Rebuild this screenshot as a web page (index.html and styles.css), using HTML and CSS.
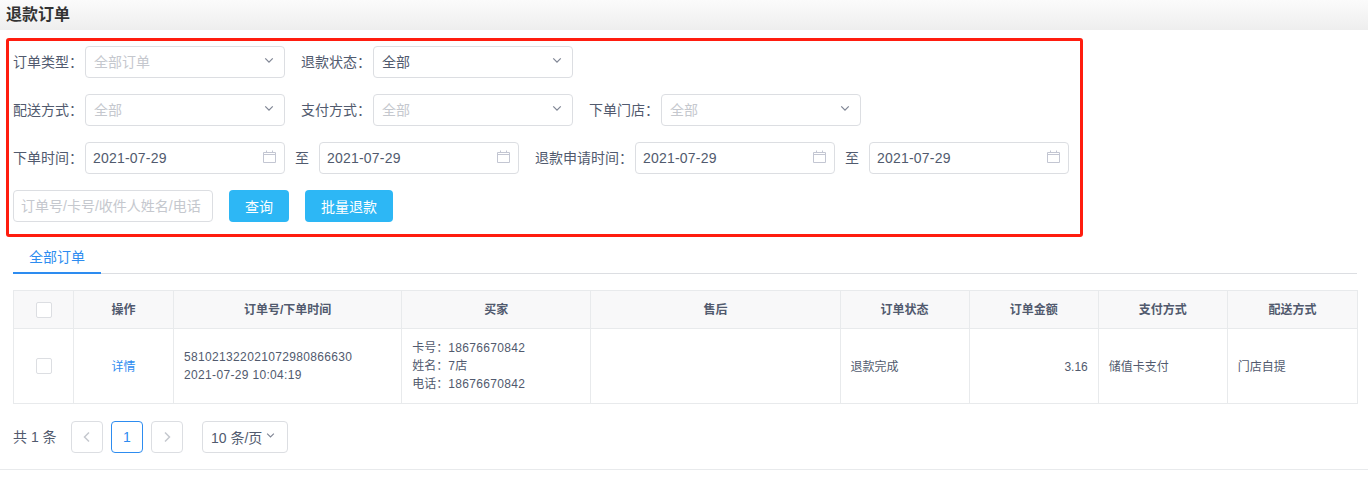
FILE: index.html
```html
<!DOCTYPE html>
<html lang="zh-CN">
<head>
<meta charset="utf-8">
<title>退款订单</title>
<link rel="stylesheet" href="styles.css">
</head>
<body>
<header class="page-head">退款订单</header>
<form class="filter">
  <div class="row">
    <div class="field"><span class="label">订单类型：</span><div class="control"><span class="ph cjk">全部订单</span><svg class="chev" viewBox="0 0 12 8"><path d="M1.5 1.5 6 6l4.5-4.5"/></svg></div></div>
    <div class="field"><span class="label">退款状态：</span><div class="control"><span class="cjk">全部</span><svg class="chev" viewBox="0 0 12 8"><path d="M1.5 1.5 6 6l4.5-4.5"/></svg></div></div>
  </div>
  <div class="row">
    <div class="field"><span class="label">配送方式：</span><div class="control"><span class="ph cjk">全部</span><svg class="chev" viewBox="0 0 12 8"><path d="M1.5 1.5 6 6l4.5-4.5"/></svg></div></div>
    <div class="field"><span class="label">支付方式：</span><div class="control"><span class="ph cjk">全部</span><svg class="chev" viewBox="0 0 12 8"><path d="M1.5 1.5 6 6l4.5-4.5"/></svg></div></div>
    <div class="field"><span class="label">下单门店：</span><div class="control"><span class="ph cjk">全部</span><svg class="chev" viewBox="0 0 12 8"><path d="M1.5 1.5 6 6l4.5-4.5"/></svg></div></div>
  </div>
  <div class="row">
    <div class="field"><span class="label">下单时间：</span><div class="control date"><span class="day">2021-07-29</span><svg class="cal" viewBox="0 0 13 13"><path d="M.5 2.5h12v10H.5zM.5 4.5h12M3.5.5v2M9.5.5v2"/></svg></div><span class="to">至</span><div class="control date"><span class="day">2021-07-29</span><svg class="cal" viewBox="0 0 13 13"><path d="M.5 2.5h12v10H.5zM.5 4.5h12M3.5.5v2M9.5.5v2"/></svg></div></div>
    <div class="field"><span class="label wide">退款申请时间：</span><div class="control date"><span class="day">2021-07-29</span><svg class="cal" viewBox="0 0 13 13"><path d="M.5 2.5h12v10H.5zM.5 4.5h12M3.5.5v2M9.5.5v2"/></svg></div><span class="to">至</span><div class="control date"><span class="day">2021-07-29</span><svg class="cal" viewBox="0 0 13 13"><path d="M.5 2.5h12v10H.5zM.5 4.5h12M3.5.5v2M9.5.5v2"/></svg></div></div>
  </div>
  <div class="row">
    <div class="control search"><span class="ph">订单号/卡号/收件人姓名/电话</span></div>
    <button type="button" class="btn">查询</button>
    <button type="button" class="btn">批量退款</button>
  </div>
</form>
<nav class="tabs"><span class="tab">全部订单</span></nav>
<table class="orders">
  <colgroup><col class="c1"><col class="c2"><col class="c3"><col class="c4"><col class="c5"><col class="c6"><col class="c6"><col class="c6"><col class="c7"></colgroup>
  <thead>
    <tr><th><span class="check"></span></th><th>操作</th><th>订单号/下单时间</th><th>买家</th><th>售后</th><th>订单状态</th><th>订单金额</th><th>支付方式</th><th>配送方式</th></tr>
  </thead>
  <tbody>
    <tr>
      <td class="center"><span class="check"></span></td>
      <td class="center link single">详情</td>
      <td><span class="num">581021322021072980866630</span><br><span class="num">2021-07-29 10:04:19</span></td>
      <td>卡号：<span class="num">18676670842</span><br>姓名：<span class="num">7</span>店<br>电话：<span class="num">18676670842</span></td>
      <td></td>
      <td class="single">退款完成</td>
      <td class="right single">3.16</td>
      <td class="single">储值卡支付</td>
      <td class="single">门店自提</td>
    </tr>
  </tbody>
</table>
<div class="pager">
  <span class="total">共 1 条</span>
  <span class="page off"><svg class="arrow" viewBox="0 0 8 12"><path d="M6 1.5 1.5 6 6 10.5"/></svg></span>
  <span class="page on">1</span>
  <span class="page off"><svg class="arrow" viewBox="0 0 8 12"><path d="M2 1.5 6.5 6 2 10.5"/></svg></span>
  <span class="size">10 条/页<svg class="chev small" viewBox="0 0 12 8"><path d="M1.5 1.5 6 6l4.5-4.5"/></svg></span>
</div>
<div class="foot"></div>
</body>
</html>
```
FILE: styles.css
```css
* { box-sizing: border-box; }
html, body { margin: 0; padding: 0; }
body {
  background: #fff;
  color: #515a6e;
  font-family: "Liberation Sans", "Noto Sans CJK SC", sans-serif;
  font-size: 14px;
  height: 482px;
  overflow: hidden;
}
.page-head {
  height: 30px;
  line-height: 29px;
  padding-left: 6px;
  font-size: 16px;
  font-weight: 700;
  color: #333;
  background: linear-gradient(#fbfbfb, #eeeeee);
}
.filter {
  width: 1077px;
  height: 199px;
  margin: 8px 0 0 6px;
  padding: 5px 4px;
  border: 3px solid #ff1d0f;
  border-radius: 3px;
  display: flex;
  flex-direction: column;
  gap: 16px;
}
.row { display: flex; gap: 16px; height: 32px; }
.field { display: flex; align-items: center; }
.label { width: 72px; padding-bottom: 2px; white-space: nowrap; }
.label.wide { width: 100px; }
.control {
  width: 200px;
  height: 32px;
  padding: 0 8px;
  border: 1px solid #dcdee2;
  border-radius: 4px;
  display: flex;
  align-items: center;
  justify-content: space-between;
  background: #fff;
}
.cjk { padding-bottom: 2px; }
.date { padding-left: 7px; padding-right: 8px; }
.day { letter-spacing: .2px; }
.ph { color: #c5c8ce; }
.search { padding: 0 7px 3px; white-space: nowrap; overflow: hidden; }
.chev { width: 10px; height: 7px; fill: none; stroke: #808695; stroke-width: 1.5; margin-right: 2px; margin-bottom: 3px; }
.chev.small { width: 9px; margin: 0 0 3px 4px; }
.cal { width: 13px; height: 13px; fill: none; stroke: #c3c6d2; stroke-width: 1; margin-bottom: 3px; }
.to { width: 34px; padding-bottom: 2px; text-align: center; }
.btn {
  height: 32px;
  width: 60px;
  padding: 0;
  border: 0;
  border-radius: 4px;
  background: #2db7f5;
  color: #fff;
  font: inherit;
}
.btn + .btn { width: 88px; }
.tabs {
  height: 37px;
  margin: 0 11px 0 13px;
  border-bottom: 1px solid #dcdee2;
  display: flex;
}
.tab {
  width: 88px;
  height: 37px;
  margin-bottom: -1px;
  padding-top: 9px;
  text-align: center;
  color: #2d8cf0;
  border-bottom: 2px solid #2d8cf0;
}
.orders {
  width: 1345px;
  margin: 16px 0 0 13px;
  border-collapse: collapse;
  table-layout: fixed;
  font-size: 12px;
  line-height: 18px;
  border: 1px solid #dcdee2;
}
.c1 { width: 60px; }
.c2 { width: 100px; }
.c3 { width: 228px; }
.c4 { width: 189px; }
.c5 { width: 249px; }
.c6 { width: 129px; }
.c7 { width: 130px; }
.orders th, .orders td { border: 1px solid #e8eaec; padding: 0 10px; }
.orders th {
  height: 38px;
  background: #f8f8f9;
  font-weight: 700;
  text-align: center;
}
.orders td { height: 75px; }
.orders td.single { padding-top: 2px; }
.num { letter-spacing: .33px; }
.center { text-align: center; }
.right { text-align: right; }
.link { color: #2d8cf0; }
.check {
  display: block;
  width: 16px;
  height: 16px;
  margin: 0 auto;
  border: 1px solid #dcdee2;
  border-radius: 2px;
  background: #fff;
}
.pager {
  display: flex;
  align-items: center;
  height: 32px;
  margin: 17px 0 0 13px;
}
.total { width: 58px; padding-bottom: 2px; }
.page {
  width: 32px;
  height: 32px;
  margin-right: 8px;
  border: 1px solid #dcdee2;
  border-radius: 4px;
  display: flex;
  align-items: center;
  justify-content: center;
}
.page.on { border-color: #2d8cf0; color: #2d8cf0; }
.arrow { width: 8px; height: 12px; fill: none; stroke: #c5c8ce; stroke-width: 1.5; }
.size {
  width: 86px;
  height: 32px;
  margin-left: 11px;
  padding-left: 8px;
  border: 1px solid #dcdee2;
  border-radius: 4px;
  display: flex;
  align-items: center;
  white-space: nowrap;
}
.foot { margin-top: 16px; border-top: 1px solid #e8eaec; }
```
